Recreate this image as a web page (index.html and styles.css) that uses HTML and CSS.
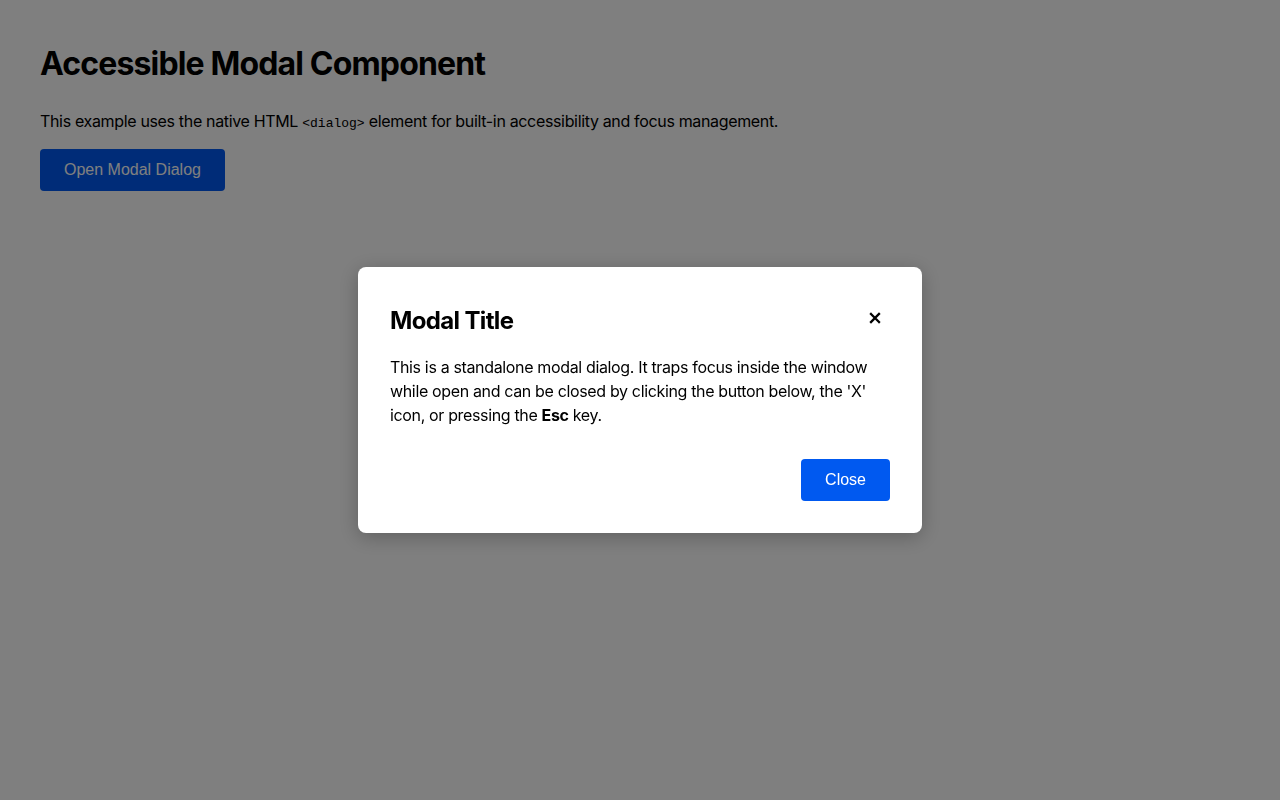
FILE: index.html
```html
<!DOCTYPE html>
<html lang="en">
<head>
<meta charset="utf-8">
<title>Accessible Modal Component</title>
<link rel="stylesheet" href="styles.css">
</head>
<body>
<main class="page">
  <h1 class="page-title">Accessible Modal Component</h1>
  <p class="page-text">This example uses the native HTML <code>&lt;dialog&gt;</code> element for built-in accessibility and focus management.</p>
  <button class="btn btn-primary" type="button">Open Modal Dialog</button>
</main>
<div class="backdrop">
  <div class="modal" role="dialog" aria-modal="true" aria-labelledby="modal-title">
    <div class="modal-header">
      <h2 class="modal-title" id="modal-title">Modal Title</h2>
      <button class="modal-x" type="button" aria-label="Close">
        <svg width="12" height="12" viewBox="0 0 12 12" aria-hidden="true"><path d="M2 2 L10 10 M10 2 L2 10" stroke="#000" stroke-width="2.3" stroke-linecap="square" fill="none"/></svg>
      </button>
    </div>
    <p class="modal-body">This is a standalone modal dialog. It traps focus inside the window while open and can be closed by clicking the button below, the 'X' icon, or pressing the <strong>Esc</strong> key.</p>
    <div class="modal-footer">
      <button class="btn btn-primary" type="button">Close</button>
    </div>
  </div>
</div>
</body>
</html>
```
FILE: styles.css
```css
html, body {
  margin: 0;
  padding: 0;
  background: #ffffff;
}
body {
  font-family: Inter, "Noto Sans", sans-serif;
  color: #000;
}
.page {
  padding: 45px 40px 40px;
}
.page-title {
  margin: 0 0 26px;
  font-size: 32px;
  font-weight: 700;
  line-height: 38px;
  letter-spacing: -0.85px;
}
.page-text {
  margin: 0 0 13px;
  font-size: 16px;
  line-height: 24px;
  letter-spacing: -0.34px;
}
.page-text code {
  font-family: "Liberation Mono", monospace;
  font-size: 13px;
  letter-spacing: 0;
}
.btn {
  font-family: "Liberation Sans", Arial, sans-serif;
  font-size: 16px;
  line-height: 22px;
  padding: 10px 24px;
  border: 0;
  border-radius: 4px;
  cursor: pointer;
}
.btn-primary {
  background: #0059f0;
  color: #fff;
}
.backdrop {
  position: fixed;
  inset: 0;
  background: rgba(0, 0, 0, 0.5);
  display: flex;
  align-items: center;
  justify-content: center;
}
.modal {
  width: 500px;
  padding: 32px;
  background: #fff;
  border-radius: 8px;
  box-shadow: 0 4px 20px rgba(0, 0, 0, 0.25);
}
.modal-header {
  display: flex;
  align-items: center;
  justify-content: space-between;
  height: 40px;
  margin-bottom: 16px;
}
.modal-title {
  margin: 3px 0 0;
  font-size: 24px;
  font-weight: 700;
  line-height: 30px;
  letter-spacing: -0.65px;
}
.modal-x {
  width: 32px;
  height: 32px;
  padding: 0;
  margin-right: -1px;
  margin-bottom: 2px;
  border: 0;
  background: transparent;
  display: flex;
  align-items: center;
  justify-content: center;
  cursor: pointer;
}
.modal-body {
  margin: 0 0 32px;
  font-size: 16px;
  line-height: 24px;
  letter-spacing: -0.35px;
}
.modal-footer {
  display: flex;
  justify-content: flex-end;
}
```
